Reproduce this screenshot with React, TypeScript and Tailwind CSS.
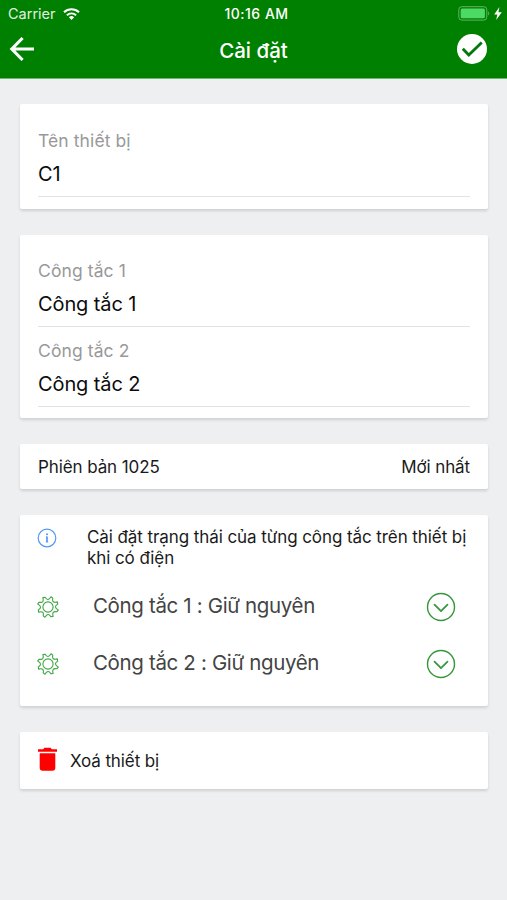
import type { ReactNode } from 'react';

function Card({
  className,
  children
}: {
  className: string;
  children: ReactNode;
}) {
  return (
    <section
      className={`w-full bg-white rounded-[2px] px-[18px] shadow-[0_2px_3px_rgba(0,0,0,0.13)] ${className}`}
    >
      {children}
    </section>
  );
}

function Field({ label, value }: { label: string; value: string }) {
  return (
    <div className="h-[80px] flex flex-col border-b-[1px] border-b-[#e3e3e3]">
      <span className="text-[17.5px] leading-[24px] mt-[12px] tracking-[0.1px] text-[#999]">
        {label}
      </span>
      <span className="text-[20px] leading-[28px] mt-[7px] tracking-[-0.1px] text-[#0c0c0c]">
        {value}
      </span>
    </div>
  );
}

const point = (radius: number, degrees: number) => {
  const angle = (degrees * Math.PI) / 180;
  return `${(11 + radius * Math.cos(angle)).toFixed(2)} ${(11 + radius * Math.sin(angle)).toFixed(2)}`;
};

// eight flared teeth joined by rounded valleys
const gearPath =
  [0, 1, 2, 3, 4, 5, 6, 7]
    .map((i) => {
      const a = i * 45 + 22.5;
      return `${i === 0 ? 'M' : 'L'}${point(10.7, a - 6)}L${point(10.1, a + 6)}Q${point(5, a + 22.5)} ${point(10.7, a + 39)}`;
    })
    .join('') + 'Z';

function GearIcon() {
  return (
    <svg
      className="size-[22px] -ml-[1px]"
      viewBox="0 0 22 22"
      fill="none"
      stroke="#3fa544"
      strokeWidth="1.1"
      strokeLinejoin="round"
    >
      <path d={gearPath} />
      <circle cx="11" cy="11" r="5.1" />
    </svg>
  );
}

function DropdownIcon() {
  return (
    <svg
      className="size-[30px] ml-auto mr-[14px]"
      viewBox="0 0 30 30"
      fill="none"
      stroke="#35963a"
      strokeWidth="1.4"
      strokeLinecap="round"
      strokeLinejoin="round"
    >
      <circle cx="15" cy="15" r="13.5" />
      <path d="M8.5 12.6 15 19.2l6.5-6.6" strokeWidth="1.7" />
    </svg>
  );
}

function SwitchRow({ text }: { text: string }) {
  return (
    <div className="h-[57px] flex items-center">
      <GearIcon />
      <span className="ml-[34px] text-[20.5px] tracking-[-0.35px] text-[#444]">
        {text}
      </span>
      <DropdownIcon />
    </div>
  );
}

export default function App() {
  return (
    <div className="w-full h-[900px] bg-[#edeff1] font-[Inter,sans-serif] overflow-hidden">
      <header className="h-[79px] bg-[#008000] text-white border-b-[1px] border-b-[#6db56d]">
        <div className="h-[27px] flex items-center pl-[8px] pr-[5px]">
          <div className="w-[180px] flex items-center gap-[7px]">
            <span className="text-[14.5px] text-[#e0f0e0]">Carrier</span>
            <svg width="17" height="12" viewBox="0 0 17 12" fill="none">
              <path d="M1 4.3a10.8 10.8 0 0 1 15 0" stroke="#fff" strokeWidth="2" />
              <path d="M3.9 7.2a6.7 6.7 0 0 1 9.2 0" stroke="#fff" strokeWidth="1.9" />
              <path d="M8.5 12 5.9 9.3a3.8 3.8 0 0 1 5.2 0Z" fill="#fff" />
            </svg>
          </div>
          <span className="flex-1 pl-[3px] text-center text-[14px] font-medium tracking-[0.5px]">
            10:16 AM
          </span>
          <div className="w-[180px] flex items-center justify-end gap-[4px]">
            <svg width="32" height="15" viewBox="0 0 32 15" fill="none">
              <rect x=".8" y=".7" width="28" height="13.4" rx="3" stroke="#69b169" />
              <rect x="2.7" y="2.6" width="24.2" height="9.6" rx="1.5" fill="#4cd964" />
              <path d="M30.2 5.2v4.4c1.4-.7 1.4-3.7 0-4.4Z" fill="#69b169" />
            </svg>
            <svg width="8" height="13" viewBox="0 0 7 12" fill="#fff">
              <path d="M4.8 0 0 7h2.9L1.8 12 7 4.8H3.9Z" />
            </svg>
          </div>
        </div>
        <div className="h-[43px] flex items-center justify-between pl-[9px] pr-[20px]">
          <button aria-label="Back" className="w-[30px]">
            <svg
              width="26"
              height="26"
              viewBox="0 0 26 26"
              fill="none"
              stroke="#fff"
              strokeWidth="3.1"
            >
              <path d="M2.8 13H25M13.6 2 2.8 13l10.8 11" />
            </svg>
          </button>
          <h1 className="pl-[11px] mt-[5px] text-[20.5px] font-[550]">
            Cài đặt
          </h1>
          <button aria-label="Save">
            <svg width="30" height="30" viewBox="0 0 30 30" fill="none">
              <circle cx="15" cy="15" r="15" fill="#fff" />
              <path
                d="m5.8 14.8 6 6.2L24.7 8.4"
                stroke="#00780a"
                strokeWidth="2.8"
              />
            </svg>
          </button>
        </div>
      </header>
      <main className="flex flex-col items-start pl-[20px] pr-[19px] pt-[25px] gap-[26px]">
        <Card className="h-[105px] pt-[13px]">
          <Field label="Tên thiết bị" value="C1" />
        </Card>
        <Card className="h-[183px] pt-[12px]">
          <Field label="Công tắc 1" value="Công tắc 1" />
          <Field label="Công tắc 2" value="Công tắc 2" />
        </Card>
        <Card className="h-[45px] flex items-center justify-between pt-[2px] text-[17px] tracking-[-0.1px] text-[#1a1a1a]">
          <span>Phiên bản 1025</span>
          <span>Mới nhất</span>
        </Card>
        <Card className="h-[191px] pt-[12px]">
          <div className="h-[51px] flex items-start">
            <svg
              className="size-[20px] mt-[1px] -ml-[1px] shrink-0"
              viewBox="0 0 20 20"
              fill="none"
              stroke="#5598f2"
            >
              <circle cx="10" cy="10" r="8.8" strokeWidth="1.2" />
              <path d="M10 8.4v5.9" strokeWidth="1.7" />
              <path d="M8.9 8.9h1.1M8.8 14h2.4" strokeWidth=".8" />
              <circle cx="10" cy="6.2" r="1" fill="#5598f2" stroke="none" />
            </svg>
            <p className="ml-[30px] text-[17px] leading-[21px] tracking-[-0.08px] text-[#1a1a1a] whitespace-nowrap">
              Cài đặt trạng thái của từng công tắc trên thiết bị
              <br />
              khi có điện
            </p>
          </div>
          <SwitchRow text="Công tắc 1 : Giữ nguyên" />
          <SwitchRow text="Công tắc 2 : Giữ nguyên" />
        </Card>
        <Card className="h-[57px] flex items-center">
          <svg width="20" height="24" viewBox="0 0 20 24" fill="#ff0000" className="-mt-[3px]">
            <path d="M0 2.3h5.2L6.4.7h6.2l1.2 1.6H19v2.4H0Z" />
            <path d="M1.7 6.3h15.6v14.5q0 3-3 3H4.7q-3 0-3-3Z" />
          </svg>
          <span className="ml-[12px] mt-[2px] text-[17px] tracking-[-0.1px] text-[#1a1a1a]">
            Xoá thiết bị
          </span>
        </Card>
      </main>
    </div>
  );
}
